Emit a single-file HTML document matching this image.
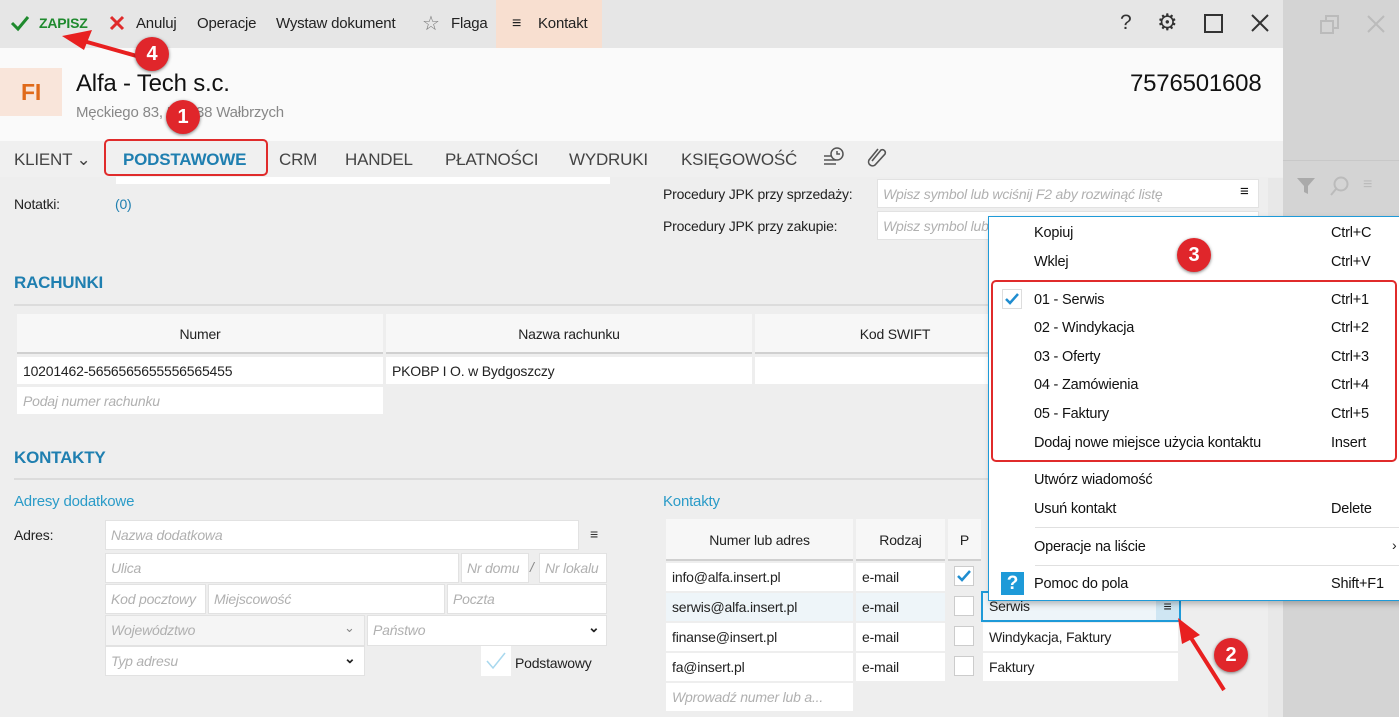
<!DOCTYPE html>
<html><head><meta charset="utf-8">
<style>
*{box-sizing:border-box;margin:0;padding:0}
body{width:1399px;height:717px;overflow:hidden;background:#d4d4d4;font-family:"Liberation Sans",sans-serif;font-size:14px;color:#222;position:relative;letter-spacing:-0.2px}
.a{position:absolute;white-space:nowrap}
.in{position:absolute;background:#fff;border:1px solid #e2e2e2;color:#b0b0b0;font-style:italic;padding:0 5px;line-height:28px;overflow:hidden;white-space:nowrap}
.cell{position:absolute;background:#fff;line-height:28px;padding:0 6px;white-space:nowrap;overflow:hidden}
.hd{position:absolute;background:#f7f7f7;text-align:center;line-height:30px;border-bottom:2px solid #d0d0d0}
.badge{position:absolute;width:34px;height:34px;border-radius:50%;background:#e0262b;color:#fff;font-weight:bold;font-size:20px;text-align:center;line-height:34px;box-shadow:0 1px 3px rgba(0,0,0,.5)}
.mi{position:absolute;left:1034px;font-size:14.5px;color:#111}
.ms{position:absolute;left:1331px;font-size:14.5px;color:#111}
.cb{position:absolute;width:20px;height:20px;background:#fff;border:1px solid #ccc}
</style></head><body>
<div class="a" style="left:0;top:0;width:1283px;height:717px;background:#eeeeee"></div>
<div class="a" style="left:0;top:0;width:1283px;height:48px;background:#e6e6e6"></div>
<div class="a" style="left:496px;top:0;width:106px;height:48px;background:#f8dfd0"></div>
<svg class="a" style="left:10px;top:14px" width="20" height="18"><path d="M2 9 L8 15 L18 3" stroke="#1f8a2e" stroke-width="3" fill="none"/></svg>
<div class="a" style="left:39px;top:15px;color:#1f8a2e;font-weight:bold;font-size:14px">ZAPISZ</div>
<svg class="a" style="left:109px;top:15px" width="16" height="16"><path d="M2 2L14 14M14 2L2 14" stroke="#e02b2b" stroke-width="3"/></svg>
<div class="a" style="left:136px;top:15px;font-size:15px">Anuluj</div>
<div class="a" style="left:197px;top:15px;font-size:15px">Operacje</div>
<div class="a" style="left:276px;top:15px;font-size:15px">Wystaw dokument</div>
<div class="a" style="left:422px;top:11px;font-size:20px;color:#777">☆</div>
<div class="a" style="left:451px;top:15px;font-size:15px">Flaga</div>
<div class="a" style="left:512px;top:15px;font-size:16px">≡</div>
<div class="a" style="left:538px;top:15px;font-size:15px">Kontakt</div>
<div class="a" style="left:1120px;top:11px;font-size:21px;color:#333">?</div>
<div class="a" style="left:1157px;top:9px;font-size:23px;color:#333">⚙</div>
<div class="a" style="left:1204px;top:14px;width:19px;height:19px;border:2px solid #333"></div>
<svg class="a" style="left:1251px;top:14px" width="18" height="18"><path d="M1 1L17 17M17 1L1 17" stroke="#333" stroke-width="2"/></svg>
<svg class="a" style="left:1320px;top:15px" width="20" height="20"><rect x="1" y="6" width="12" height="12" stroke="#bbb" stroke-width="2" fill="none"/><path d="M6 6V1h12v12h-5" stroke="#bbb" stroke-width="2" fill="none"/></svg>
<svg class="a" style="left:1367px;top:15px" width="18" height="18"><path d="M1 1L17 17M17 1L1 17" stroke="#bbb" stroke-width="2"/></svg>
<div class="a" style="left:0;top:48px;width:1283px;height:93px;background:#fafafa"></div>
<div class="a" style="left:0;top:68px;width:62px;height:48px;background:#f9e5da;color:#e06a1a;font-size:23px;font-weight:bold;text-align:center;line-height:48px">FI</div>
<div class="a" style="left:76px;top:70px;font-size:24px;color:#111">Alfa - Tech s.c.</div>
<div class="a" style="left:76px;top:104px;font-size:15px;color:#888">Męckiego 83, 58-738 Wałbrzych</div>
<div class="a" style="left:1130px;top:70px;font-size:24px;color:#111">7576501608</div>
<div class="a" style="left:0;top:141px;width:1283px;height:36px;background:#f0f0f0"></div>
<div class="a" style="left:14px;top:150px;font-size:17px;color:#444">KLIENT ⌄</div>
<div class="a" style="left:104px;top:139px;width:164px;height:37px;border:2px solid #e02b2b;border-radius:5px"></div>
<div class="a" style="left:123px;top:150px;font-size:17px;color:#1f7fb0;font-weight:bold">PODSTAWOWE</div>
<div class="a" style="left:279px;top:150px;font-size:17px;color:#444">CRM</div>
<div class="a" style="left:345px;top:150px;font-size:17px;color:#444">HANDEL</div>
<div class="a" style="left:445px;top:150px;font-size:17px;color:#444">PŁATNOŚCI</div>
<div class="a" style="left:569px;top:150px;font-size:17px;color:#444">WYDRUKI</div>
<div class="a" style="left:681px;top:150px;font-size:17px;color:#444">KSIĘGOWOŚĆ</div>
<svg class="a" style="left:823px;top:146px" width="24" height="22"><circle cx="14" cy="8" r="6" stroke="#555" fill="none" stroke-width="1.5"/><path d="M14 5v3h3M1 10h7M1 14h12M1 18h12" stroke="#555" stroke-width="1.5" fill="none"/></svg>
<svg class="a" style="left:866px;top:145px" width="24" height="24"><path d="M6 16 L15 5 a3 3 0 0 1 4 4 L9 20 a4 4 0 0 1-6-5 L12 4" stroke="#555" stroke-width="1.6" fill="none"/></svg>
<div class="a" style="left:116px;top:177px;width:494px;height:7px;background:#fff"></div>
<div class="a" style="left:14px;top:196px">Notatki:</div>
<div class="a" style="left:115px;top:196px;color:#1f7fb0">(0)</div>
<div class="a" style="left:663px;top:186px">Procedury JPK przy sprzedaży:</div>
<div class="in" style="left:877px;top:179px;width:382px;height:29px">Wpisz symbol lub wciśnij F2 aby rozwinąć listę</div>
<div class="a" style="left:1240px;top:183px;font-size:15px;color:#111">≡</div>
<div class="a" style="left:1266px;top:180px;color:#bbb;font-size:16px">⌃</div>
<div class="a" style="left:663px;top:218px">Procedury JPK przy zakupie:</div>
<div class="in" style="left:877px;top:211px;width:382px;height:29px">Wpisz symbol lub</div>
<div class="a" style="left:14px;top:273px;font-size:17px;font-weight:bold;color:#1f7fb0">RACHUNKI</div>
<div class="a" style="left:14px;top:304px;width:1000px;height:2px;background:#dcdcdc"></div>
<div class="hd" style="left:17px;top:314px;width:366px;height:40px;line-height:40px">Numer</div>
<div class="hd" style="left:386px;top:314px;width:366px;height:40px;line-height:40px">Nazwa rachunku</div>
<div class="hd" style="left:755px;top:314px;width:280px;height:40px;line-height:40px">Kod SWIFT</div>
<div class="cell" style="left:17px;top:357px;width:366px;height:27px">10201462-5656565655556565455</div>
<div class="cell" style="left:386px;top:357px;width:366px;height:27px">PKOBP I O. w Bydgoszczy</div>
<div class="cell" style="left:755px;top:357px;width:280px;height:27px"></div>
<div class="cell" style="left:17px;top:387px;width:366px;height:27px;color:#b0b0b0;font-style:italic">Podaj numer rachunku</div>
<div class="a" style="left:14px;top:448px;font-size:17px;font-weight:bold;color:#1f7fb0">KONTAKTY</div>
<div class="a" style="left:14px;top:478px;width:1000px;height:2px;background:#dcdcdc"></div>
<div class="a" style="left:14px;top:493px;font-size:15px;color:#2a9bc8">Adresy dodatkowe</div>
<div class="a" style="left:14px;top:527px">Adres:</div>
<div class="in" style="left:105px;top:520px;width:474px;height:30px">Nazwa dodatkowa</div>
<div class="a" style="left:590px;top:526px;color:#333">≡</div>
<div class="in" style="left:105px;top:553px;width:354px;height:30px">Ulica</div>
<div class="in" style="left:461px;top:553px;width:68px;height:30px">Nr domu</div>
<div class="a" style="left:530px;top:559px;color:#888;font-style:italic">/</div>
<div class="in" style="left:539px;top:553px;width:68px;height:30px">Nr lokalu</div>
<div class="in" style="left:105px;top:584px;width:101px;height:30px">Kod pocztowy</div>
<div class="in" style="left:208px;top:584px;width:237px;height:30px">Miejscowość</div>
<div class="in" style="left:447px;top:584px;width:160px;height:30px">Poczta</div>
<div class="in" style="left:105px;top:615px;width:260px;height:31px;background:#f5f5f5">Województwo</div>
<div class="a" style="left:344px;top:620px;color:#888;font-size:13px">⌄</div>
<div class="in" style="left:367px;top:615px;width:240px;height:31px">Państwo</div>
<div class="a" style="left:588px;top:619px;color:#222;font-size:14px;font-weight:bold">⌄</div>
<div class="in" style="left:105px;top:646px;width:260px;height:30px">Typ adresu</div>
<div class="a" style="left:344px;top:650px;color:#222;font-size:14px;font-weight:bold">⌄</div>
<div class="a" style="left:481px;top:646px;width:30px;height:30px;background:#fff"></div>
<svg class="a" style="left:484px;top:650px" width="24" height="22"><path d="M3 11 L9 18 L21 3" stroke="#a8d8ee" stroke-width="1.5" fill="none"/></svg>
<div class="a" style="left:515px;top:655px">Podstawowy</div>
<div class="a" style="left:663px;top:493px;font-size:15px;color:#2a9bc8">Kontakty</div>
<div class="hd" style="left:666px;top:519px;width:187px;height:42px;line-height:42px">Numer lub adres</div>
<div class="hd" style="left:856px;top:519px;width:89px;height:42px;line-height:42px">Rodzaj</div>
<div class="hd" style="left:948px;top:519px;width:33px;height:42px;line-height:42px">P</div>
<div class="cell" style="left:666px;top:563px;width:187px">info@alfa.insert.pl</div>
<div class="cell" style="left:856px;top:563px;width:89px">e-mail</div>
<div class="cell" style="left:948px;top:563px;width:33px"></div>
<div class="cb" style="left:954px;top:566px"></div>
<svg class="a" style="left:955px;top:567px" width="18" height="18"><path d="M3 9 L7 13 L15 4" stroke="#1f8dd0" stroke-width="2.5" fill="none"/></svg>
<div class="cell" style="left:666px;top:593px;width:187px;background:#eef5f9">serwis@alfa.insert.pl</div>
<div class="cell" style="left:856px;top:593px;width:89px;background:#eef5f9">e-mail</div>
<div class="cell" style="left:948px;top:593px;width:33px;background:#eef5f9"></div>
<div class="cb" style="left:954px;top:596px"></div>
<div class="cell" style="left:1181px;top:593px;width:84px;background:#eef5f9"></div>
<div class="cell" style="left:981px;top:591px;width:200px;height:31px;border:2px solid #1e9ad8;background:#eef5f9;line-height:27px">Serwis</div>
<div class="a" style="left:1156px;top:593px;width:23px;height:27px;background:#cfe6f3;text-align:center;line-height:27px">≡</div>
<div class="cell" style="left:666px;top:623px;width:187px">finanse@insert.pl</div>
<div class="cell" style="left:856px;top:623px;width:89px">e-mail</div>
<div class="cell" style="left:948px;top:623px;width:33px"></div>
<div class="cb" style="left:954px;top:626px"></div>
<div class="cell" style="left:983px;top:623px;width:195px">Windykacja, Faktury</div>
<div class="cell" style="left:1181px;top:623px;width:84px"></div>
<div class="cell" style="left:666px;top:653px;width:187px">fa@insert.pl</div>
<div class="cell" style="left:856px;top:653px;width:89px">e-mail</div>
<div class="cell" style="left:948px;top:653px;width:33px"></div>
<div class="cb" style="left:954px;top:656px"></div>
<div class="cell" style="left:983px;top:653px;width:195px">Faktury</div>
<div class="cell" style="left:1181px;top:653px;width:84px"></div>
<div class="cell" style="left:666px;top:683px;width:187px;color:#b0b0b0;font-style:italic">Wprowadź numer lub a...</div>
<div class="a" style="left:1268px;top:178px;width:15px;height:539px;background:#e8e8e8"></div>
<div class="a" style="left:1283px;top:160px;width:116px;height:1px;background:#c8c8c8"></div>
<svg class="a" style="left:1296px;top:176px" width="20" height="20"><path d="M1 2h18l-7 8v8l-4-2v-6z" fill="#aaa"/></svg>
<svg class="a" style="left:1329px;top:175px" width="22" height="22"><circle cx="12" cy="9" r="6.5" stroke="#bbb" stroke-width="2" fill="none"/><path d="M7 14L2 20" stroke="#bbb" stroke-width="2"/></svg>
<div class="a" style="left:1363px;top:176px;color:#bbb;font-size:16px">≡</div>
<div class="a" style="left:988px;top:216px;width:420px;height:385px;background:#fff;border:1px solid #1e9ad8;box-shadow:2px 3px 6px rgba(0,0,0,.25)"></div>
<div class="mi" style="top:225px">Kopiuj</div><div class="ms" style="top:225px">Ctrl+C</div>
<div class="mi" style="top:254px">Wklej</div><div class="ms" style="top:254px">Ctrl+V</div>
<div class="a" style="left:991px;top:280px;width:406px;height:182px;border:2px solid #e02b2b;border-radius:5px"></div>
<div class="a" style="left:1002px;top:289px;width:20px;height:20px;border:1px solid #ddd"></div>
<svg class="a" style="left:1003px;top:290px" width="18" height="18"><path d="M3 9 L7 13 L15 4" stroke="#1f8dd0" stroke-width="2.5" fill="none"/></svg>
<div class="mi" style="top:292px">01 - Serwis</div><div class="ms" style="top:292px">Ctrl+1</div>
<div class="mi" style="top:320px">02 - Windykacja</div><div class="ms" style="top:320px">Ctrl+2</div>
<div class="mi" style="top:349px">03 - Oferty</div><div class="ms" style="top:349px">Ctrl+3</div>
<div class="mi" style="top:377px">04 - Zamówienia</div><div class="ms" style="top:377px">Ctrl+4</div>
<div class="mi" style="top:406px">05 - Faktury</div><div class="ms" style="top:406px">Ctrl+5</div>
<div class="mi" style="top:435px">Dodaj nowe miejsce użycia kontaktu</div><div class="ms" style="top:435px">Insert</div>
<div class="mi" style="top:472px">Utwórz wiadomość</div>
<div class="mi" style="top:501px">Usuń kontakt</div><div class="ms" style="top:501px">Delete</div>
<div class="a" style="left:1035px;top:527px;width:364px;height:1px;background:#e0e0e0"></div>
<div class="mi" style="top:539px">Operacje na liście</div><div class="a" style="left:1392px;top:537px;font-size:14px">›</div>
<div class="a" style="left:1035px;top:565px;width:364px;height:1px;background:#e0e0e0"></div>
<div class="a" style="left:1001px;top:572px;width:23px;height:23px;background:#1e9ad8;color:#fff;font-weight:bold;font-size:19px;text-align:center;line-height:23px">?</div>
<div class="mi" style="top:576px">Pomoc do pola</div><div class="ms" style="top:576px">Shift+F1</div>
<svg class="a" style="left:0;top:0" width="1399" height="717">
<path d="M158 62 L80 40" stroke="#e82020" stroke-width="4"/>
<path d="M62 36 L92 30 L84 50 z" fill="#e82020"/>
<path d="M1224 690 L1186 630" stroke="#e82020" stroke-width="4"/>
<path d="M1178 618 L1200 635 L1182 644 z" fill="#e82020"/>
</svg>
<div class="badge" style="left:135px;top:37px">4</div>
<div class="badge" style="left:166px;top:100px">1</div>
<div class="badge" style="left:1177px;top:238px">3</div>
<div class="badge" style="left:1214px;top:638px">2</div>
</body></html>
